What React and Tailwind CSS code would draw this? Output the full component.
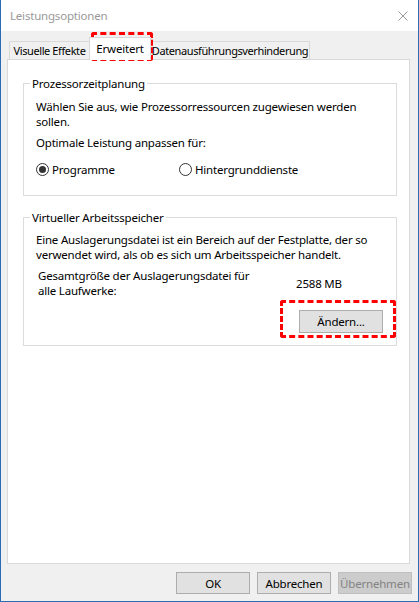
export default function App() {
  return (
    <div className="relative w-[419px] h-[602px] border border-t-0 border-[#2b6db3] bg-[#f0f0f0] flex flex-col font-['Noto_Sans',sans-serif] text-[11.5px] tracking-[-0.2px] leading-[15px] text-black overflow-hidden">
      {/* Title bar */}
      <div className="h-[31px] bg-white flex items-center justify-between pl-[9px] pr-[10px] shrink-0">
        <span className="text-[#999999]">Leistungsoptionen</span>
        <svg width="10" height="10" viewBox="0 0 10 10">
          <path d="M0.5 0.5 L9.5 9.5 M9.5 0.5 L0.5 9.5" stroke="#9a9a9a" strokeWidth="1" fill="none" />
        </svg>
      </div>

      {/* Body */}
      <div className="flex flex-col px-[6px]">
        {/* Tabs */}
        <div className="flex items-end h-[22px] mt-[6px] pl-[2px] whitespace-nowrap text-[11px] tracking-[-0.4px]">
          <div className="h-[18px] w-[81px] border border-b-0 border-[#d9d9d9] bg-[#f0f0f0] flex items-center justify-center">
            Visuelle Effekte
          </div>
          <div className="relative z-10 -mb-[1px] h-[23px] w-[62px] -ml-[1px] border border-b-0 border-[#d9d9d9] bg-white flex items-center justify-center pb-[1px] text-[11.5px] tracking-[-0.2px]">
            Erweitert
          </div>
          <div className="h-[18px] w-[160px] -ml-[1px] border border-b-0 border-[#d9d9d9] bg-[#f0f0f0] flex items-center justify-center">
            Datenausführungsverhinderung
          </div>
        </div>

        {/* Panel */}
        <div className="h-[505px] w-[403px] border border-[#d9d9d9] bg-white">
          {/* Group 1 */}
          <fieldset className="mt-[16px] ml-[15px] w-[374px] border border-[#dcdcdc] p-0">
            <legend className="ml-[6px] px-[2px]">Prozessorzeitplanung</legend>
            <div className="pl-[12px] pt-[8px] pb-[18px]">
              <p>Wählen Sie aus, wie Prozessorressourcen zugewiesen werden<br />sollen.</p>
              <p className="mt-[6px]">Optimale Leistung anpassen für:</p>
              <div className="mt-[12px] flex items-center h-[15px]">
                <div className="w-[143px] flex items-center gap-[3px]">
                  <span className="w-[13px] h-[13px] rounded-full border border-[#333333] bg-white flex items-center justify-center">
                    <span className="w-[7px] h-[7px] rounded-full bg-[#333333]" />
                  </span>
                  <span>Programme</span>
                </div>
                <div className="flex items-center gap-[3px]">
                  <span className="w-[13px] h-[13px] rounded-full border border-[#333333] bg-white" />
                  <span>Hintergrunddienste</span>
                </div>
              </div>
            </div>
          </fieldset>

          {/* Group 2 */}
          <fieldset className="mt-[14px] ml-[15px] w-[374px] border border-[#dcdcdc] p-0">
            <legend className="ml-[6px] px-[2px]">Virtueller Arbeitsspeicher</legend>
            <div className="pl-[12px] pt-[7px] pb-[12px]">
              <p>Eine Auslagerungsdatei ist ein Bereich auf der Festplatte, der so<br />verwendet wird, als ob es sich um Arbeitsspeicher handelt.</p>
              <div className="mt-[6px] flex items-center">
                <p className="pl-[2px] w-[260px]">Gesamtgröße der Auslagerungsdatei für<br />alle Laufwerke:</p>
                <span>2588 MB</span>
              </div>
              <div className="mt-[12px] flex justify-end pr-[13px]">
                <button className="w-[84px] h-[23px] border border-[#adadad] bg-[#e1e1e1] flex items-center justify-center">
                  Ändern...
                </button>
              </div>
            </div>
          </fieldset>
        </div>

        {/* Bottom buttons */}
        <div className="flex justify-end gap-[7px] pt-[8px]">
          <button className="w-[74px] h-[22px] border border-[#adadad] bg-[#e1e1e1] flex items-center justify-center">OK</button>
          <button className="w-[74px] h-[22px] border border-[#adadad] bg-[#e1e1e1] flex items-center justify-center">Abbrechen</button>
          <button disabled className="w-[74px] h-[22px] border border-[#bfbfbf] bg-[#cccccc] text-[#838383] flex items-center justify-center">Übernehmen</button>
        </div>
      </div>

      {/* Red dashed highlights */}
      <div className="absolute left-[90px] top-[32px] w-[62px] h-[29px] border-[3px] border-dashed border-[#ff0000] rounded-[3px] pointer-events-none" />
      <div className="absolute left-[279px] top-[300px] w-[116px] h-[38px] border-[3px] border-dashed border-[#ff0000] rounded-[3px] pointer-events-none" />
    </div>
  );
}
